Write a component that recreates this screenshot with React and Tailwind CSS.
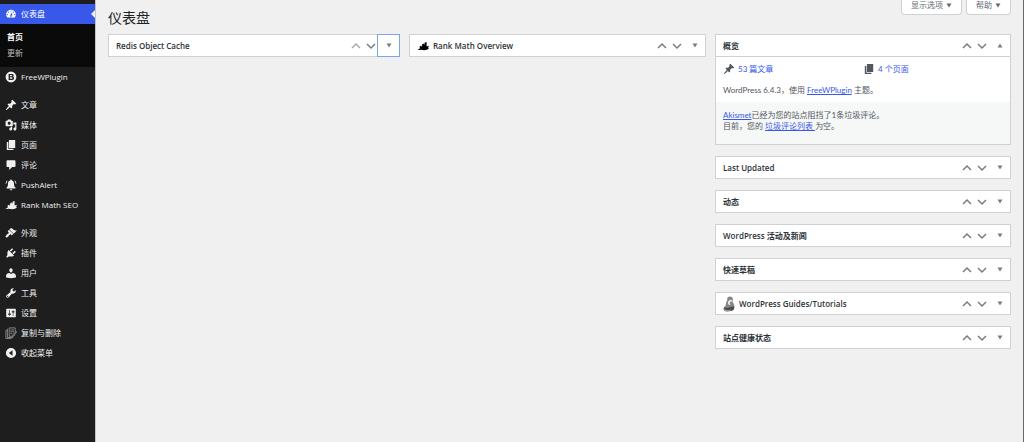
import { useState } from "react";

const icons = {
  dashboard:
    "M3.76 16h12.48c1.1-1.37 1.76-3.11 1.76-5 0-4.42-3.58-8-8-8s-8 3.58-8 8c0 1.89.66 3.63 1.76 5zM10 4c.55 0 1 .45 1 1s-.45 1-1 1-1-.45-1-1 .45-1 1-1zM6 6c.55 0 1 .45 1 1s-.45 1-1 1-1-.45-1-1 .45-1 1-1zm8 0c.55 0 1 .45 1 1s-.45 1-1 1-1-.45-1-1 .45-1 1-1zm-5.37 5.55L12 7v6c0 1.1-.9 2-2 2s-2-.9-2-2c0-.57.24-1.08.63-1.45zM4 10c.55 0 1 .45 1 1s-.45 1-1 1-1-.45-1-1 .45-1 1-1zm12 0c.55 0 1 .45 1 1s-.45 1-1 1-1-.45-1-1 .45-1 1-1zm-5 3c0-.55-.45-1-1-1s-1 .45-1 1 .45 1 1 1 1-.45 1-1z",
  plugin:
    "M10 1a9 9 0 1 0 0 18 9 9 0 0 0 0-18zM6 5h5.500c2 0 3 1 3 2.500 0 1-.4 1.700-1.200 2.100 1.200.4 1.900 1.300 1.900 2.600 0 1.900-1.400 2.800-3.400 2.800H6zm2.200 1.800v2h2.800c1.500 0 1.500-2 0-2zm0 3.700v2.600h3c2 0 2-2.600 0-2.600z",
  post: "M10.44 3.02l1.82-1.82 6.36 6.35-1.83 1.82c-1.05-.68-2.48-.57-3.41.36l-.75.75c-.92.93-1.04 2.35-.35 3.41l-1.83 1.82-2.41-2.41-2.8 2.79c-.42.42-3.38 2.71-3.8 2.29s1.86-3.39 2.28-3.81l2.79-2.79L4.1 9.36l1.83-1.82c1.05.69 2.48.57 3.4-.36l.75-.75c.93-.92 1.05-2.35.36-3.41z",
  media:
    "M13 11V4c0-.55-.45-1-1-1h-1.67L9 1H5L3.67 3H2c-.55 0-1 .45-1 1v7c0 .55.45 1 1 1h10c.55 0 1-.45 1-1zM7 4.500c1.380 0 2.500 1.120 2.500 2.500S8.380 9.500 7 9.500 4.500 8.380 4.500 7 5.620 4.500 7 4.500zM14 6h5v10.500c0 1.380-1.120 2.500-2.500 2.500S14 17.880 14 16.500s1.120-2.500 2.500-2.500c.17 0 .34.02.5.05V9h-3V6zm-4 8.050V13h2v3.500c0 1.380-1.120 2.500-2.500 2.500S7 17.880 7 16.500 8.120 14 9.500 14c.17 0 .34.02.5.05z",
  page: "M6.500 15V1.500H17V15H6.500zm-1 1.200H14v2.300H3V5h2.500v11.200z",
  comment:
    "M4.500 2h11c1.100 0 2 .9 2 2v7.500c0 1.100-.9 2-2 2H12l-5 5v-5H4.500c-1.100 0-2-.9-2-2V4c0-1.100.9-2 2-2z",
  bell: "M10 1c.9 0 1.500.6 1.500 1.400C14 3 15 5 15 7.500c0 4 .8 5.500 2.500 7V16h-15v-1.500C4.200 13 5 11.500 5 7.500 5 5 6 3 8.500 2.400 8.500 1.600 9.100 1 10 1zM7.800 17h4.400c-.2 1.300-1 2-2.200 2s-2-.7-2.200-2zM3.200 2.500l1 1C3 4.800 2.500 6.300 2.400 8H1c.1-2.200.8-4 2.200-5.500zm13.600 0C18.200 4 18.900 5.800 19 8h-1.400c-.1-1.700-.6-3.200-1.800-4.500z",
  rank: "M0 16c2-.2 3.300-.8 4.500-2V10.500l3-1v2l1-1V7l3-1v2.500l1-1.300V4.500l3.500-1v7.300l4-1.300-1.500 4 1.500.5-2.500 2c-3.500 1.300-8 1-11.500.3-2 .6-4 .6-6-.3z",
  appearance:
    "M14.48 11.06L7.41 3.99l1.5-1.5c.5-.56 2.3-.47 3.51.32 1.21.8 1.43 1.28 2.91 2.1 1.18.64 2.45 1.26 4.45.85zm-.71.71L6.7 4.7 4.93 6.47c-.39.39-.39 1.02 0 1.41l1.06 1.06c.39.39.39 1.03 0 1.42-.6.6-1.43 1.11-2.21 1.69-.35.26-.7.53-1.01.84C1.43 14.23.4 16.08 1.4 17.07c.99 1 2.84-.03 4.18-1.36.31-.31.58-.66.85-1.02.57-.78 1.08-1.61 1.69-2.21.39-.39 1.02-.39 1.41 0l1.06 1.06c.39.39 1.02.39 1.41 0z",
  plug: "M13.11 4.36L9.87 7.6 8 5.73l3.24-3.24c.35-.34 1.05-.2 1.56.32.52.51.66 1.21.31 1.55zm-8 1.77l.91-1.12 9.01 9.01-1.19.84c-.71.71-2.63 1.16-3.82 1.16H6.14L4.9 17.26c-.59.59-1.54.59-2.12 0-.59-.58-.59-1.53 0-2.12l1.24-1.24v-3.88c0-1.13.4-3.19 1.09-3.89zm7.26 3.97l3.24-3.24c.34-.35 1.04-.21 1.55.31.52.51.66 1.21.31 1.55l-3.24 3.25z",
  users:
    "M10 9.25c-2.27 0-2.73-3.44-2.73-3.44C7 4.02 7.82 2 9.97 2c2.16 0 2.98 2.02 2.71 3.81 0 0-.41 3.44-2.68 3.44zM7.230 10L10 11.820 12.720 10c2.790 0 5.520 2.330 5.520 4.530v2.990s-4.150 1.130-8.240 1.130c-4.150 0-8.240-1.130-8.240-1.130v-2.990c0-2.250 2.440-4.530 5.470-4.530z",
  tools:
    "M16.68 9.77c-1.34 1.34-3.3 1.67-4.95.99l-5.41 6.52c-.99.99-2.59.99-3.58 0s-.99-2.59 0-3.57l6.52-5.42c-.68-1.65-.35-3.61.99-4.95 1.28-1.28 3.12-1.62 4.72-1.06l-2.89 2.89 2.82 2.82 2.86-2.87c.53 1.58.18 3.39-1.08 4.65zM3.81 16.21c.4.39 1.04.39 1.43 0 .4-.4.4-1.04 0-1.43-.39-.4-1.03-.4-1.43 0-.39.39-.39 1.03 0 1.43z",
  settings:
    "M18 16V4c0-.55-.45-1-1-1H3c-.55 0-1 .45-1 1v12c0 .55.45 1 1 1h14c.55 0 1-.45 1-1zM8 11h1c.55 0 1 .45 1 1s-.45 1-1 1H8v1.500c0 .28-.22.5-.5.5s-.5-.22-.5-.5V13H6c-.55 0-1-.45-1-1s.45-1 1-1h1V5.500c0-.28.22-.5.5-.5s.5.22.5.5V11zm5-2h-1c-.55 0-1-.45-1-1s.45-1 1-1h1V5.500c0-.28.22-.5.5-.5s.5.22.5.5V7h1c.55 0 1 .45 1 1s-.45 1-1 1h-1v5.500c0 .28-.22.5-.5.5s-.5-.22-.5-.5V9z",
  collapse:
    "M10 1.500a8.500 8.500 0 1 0 0 17 8.500 8.500 0 0 0 0-17zM12.500 5.500v9L6.500 10z",
};

const menu = [
  [
    { icon: "post", label: "文章" },
    { icon: "media", label: "媒体" },
    { icon: "page", label: "页面" },
    { icon: "comment", label: "评论" },
    { icon: "bell", label: "PushAlert" },
    { icon: "rank", label: "Rank Math SEO" },
  ],
  [
    { icon: "appearance", label: "外观" },
    { icon: "plug", label: "插件" },
    { icon: "users", label: "用户" },
    { icon: "tools", label: "工具" },
    { icon: "settings", label: "设置" },
    { icon: "copy", label: "复制与删除" },
  ],
];

const Icon = ({ name, className = "size-3" }) => (
  <svg
    viewBox="0 0 20 20"
    fill="currentColor"
    fillRule="evenodd"
    className={`shrink-0 ${className}`}
  >
    <path d={icons[name]} />
  </svg>
);

const CopyIcon = () => (
  <svg
    viewBox="0 0 20 20"
    fill="none"
    stroke="currentColor"
    strokeWidth="1.3"
    className="size-3 shrink-0 text-[#a0a0a0]"
  >
    <path d="M7 1.500h10v8M17 13l-3 2.500H7v-14M5 3.500H4v14h9v-1M3 5.500H1.500v13.800H11M9 5h6M9 8h6M9 11h3M12.500 13.500l6-6 1 1-6 6z" />
  </svg>
);

const GuideIcon = () => (
  <svg viewBox="0 0 24 32" className="h-4 w-3 shrink-0">
    <path
      d="M10 2c5-3 10 0 10 5l-1 5c4 4 5 11 3 15-3 4-16 5-20 2-3-4 1-7 3-9 1-5 1-9 4-12-1-2-1-4 1-6z"
      fill="#858585"
    />
    <path d="M12 9c3-3 7-1 7 1l-3 1c-3 1-3 4-1 7-5 1-7-5-3-9z" fill="#ececec" />
    <path d="M2 22c5 3 9 2 12 0l8-1c0 3 0 5-2 7-5 3-14 3-17 1z" fill="#4a4a4a" />
    <path d="M3 26c4 3 9 3 13 1l-2 3c-4 1-9 1-12-1z" fill="#a5a5a5" />
  </svg>
);

const Triangle = ({ up }) => (
  <svg viewBox="0 0 6 5" fill="currentColor" className="h-[5px] w-1.5 shrink-0">
    <path d={up ? "M3 0.500L5.500 4.500H0.500z" : "M0.500 0.500H5.500L3 4.500z"} />
  </svg>
);

const Chevron = ({ up }) => (
  <svg
    viewBox="0 0 10 10"
    fill="none"
    stroke="currentColor"
    strokeWidth="1.500"
    className="size-2.5"
  >
    <path d={up ? "M1 7l4-4 4 4" : "M1 3l4 4 4-4"} />
  </svg>
);

const MenuItem = ({ icon, label }) => (
  <li>
    <a
      href="#"
      className="flex h-5 items-center gap-1 pl-[5px] text-[#f0f0f1] hover:text-[#7b90ff]"
    >
      {icon === "copy" ? <CopyIcon /> : <Icon name={icon} />}
      {label}
    </a>
  </li>
);

const Sidebar = () => (
  <nav className="w-24 shrink-0 border-r border-[#c4c4c4] bg-[#1e1e1e] pt-1">
    <a
      href="#"
      className="flex h-5 items-center gap-1 bg-[#3858e9] pl-[5px] text-white"
    >
      <Icon name="dashboard" />
      仪表盘
      <svg viewBox="0 0 4 8" className="ml-auto h-2 w-1" fill="#f0f0f0">
        <path d="M4 0v8L0 4z" />
      </svg>
    </a>
    <ul className="bg-[#0a0a0a] pt-[5px] pb-1.5 pl-[7px] leading-4">
      <li>
        <a href="#" className="font-semibold text-white">
          首页
        </a>
      </li>
      <li>
        <a href="#" className="text-[#bcbcbc]">
          更新
        </a>
      </li>
    </ul>
    <ul>
      <MenuItem icon="plugin" label="FreeWPlugin" />
    </ul>
    {menu.map((group, i) => (
      <ul key={i} className="mt-2">
        {group.map((m) => (
          <MenuItem key={m.label} icon={m.icon} label={m.label} />
        ))}
      </ul>
    ))}
    <button className="flex h-5 w-full cursor-pointer items-center gap-1 pl-[5px] text-[#f0f0f1]">
      <Icon name="collapse" />
      收起菜单
    </button>
  </nav>
);

const Widget = ({ title, icon, first, focused, defaultOpen, children }) => {
  const [open, setOpen] = useState(!!defaultOpen);

  return (
    <section className="border border-[#d0d1d3] bg-white">
      <div className="flex items-stretch text-[#787c82]">
        <h2 className="flex min-h-[21px] grow items-center gap-1 pl-[7px] font-semibold text-[#2c3338]">
          {icon}
          {title}
        </h2>
        <button
          aria-label="上移"
          className={`flex w-[15px] items-center justify-center ${
            first ? "text-[#a7aaad]" : ""
          }`}
        >
          <Chevron up />
        </button>
        <button
          aria-label="下移"
          className="flex w-[15px] items-center justify-center"
        >
          <Chevron />
        </button>
        <button
          aria-label="切换面板"
          onClick={() => setOpen(!open)}
          className={`flex items-center justify-center ${
            focused ? "-m-px w-[23px] border border-[#7ba7e6]" : "w-[21px]"
          }`}
        >
          <Triangle up={open && children} />
        </button>
      </div>
      {open && children}
    </section>
  );
};

const Overview = () => (
  <div className="border-t border-[#d0d1d3] font-['Lato','Noto_Sans_CJK_SC',sans-serif] text-[#50575e]">
    <div className="flex flex-col gap-[9px] px-[7px] py-1.5 leading-3">
      <ul className="grid grid-cols-2">
        <li className="flex items-center gap-[3px]">
          <Icon name="post" />
          <a href="#" className="text-[#3858e9]">
            53 篇文章
          </a>
        </li>
        <li className="flex items-center gap-[3px]">
          <Icon name="page" />
          <a href="#" className="text-[#3858e9]">
            4 个页面
          </a>
        </li>
      </ul>
      <p>
        WordPress 6.4.3，使用{" "}
        <a href="#" className="text-[#3858e9] underline">
          FreeWPlugin
        </a>{" "}
        主题。
      </p>
    </div>
    <div className="bg-[#f6f7f7] px-[7px] pt-2 pb-3 leading-[11px]">
      <p>
        <a href="#" className="text-[#3858e9] underline">
          Akismet
        </a>
        已经为您的站点阻挡了1条垃圾评论。
      </p>
      <p>
        目前，您的{" "}
        <a href="#" className="text-[#3858e9] underline">
          垃圾评论列表{" "}
        </a>
        为空。
      </p>
    </div>
  </div>
);

const ScreenTab = ({ label }) => (
  <button className="flex h-[15px] items-center gap-[3px] rounded-b-sm border border-t-0 border-[#d0d1d3] bg-white px-[9px] pb-1 text-[#646970]">
    {label}
    <Triangle />
  </button>
);

const App = () => {
  return (
    <div className="flex min-h-screen border-r border-[#6b6b6b] bg-[#f0f0f0] font-['Open_Sans','Noto_Sans_CJK_SC',sans-serif] text-[8px]">
      <Sidebar />
      <main className="grow px-3">
        <header className="flex h-[34px] items-start justify-between">
          <h1 className="pt-2 text-[14px] leading-5 text-[#1d2327]">仪表盘</h1>
          <div className="flex gap-1">
            <ScreenTab label="显示选项" />
            <ScreenTab label="帮助" />
          </div>
        </header>
        <div className="grid grid-cols-[292fr_297fr_296fr] items-start gap-[9px]">
          <Widget title="Redis Object Cache" first focused />
          <Widget
            title="Rank Math Overview"
            icon={<Icon name="rank" className="size-3 text-black" />}
          />
          <div className="flex flex-col gap-[11px]">
            <Widget title="概览" defaultOpen>
              <Overview />
            </Widget>
            <Widget title="Last Updated" />
            <Widget title="动态" />
            <Widget title="WordPress 活动及新闻" />
            <Widget title="快速草稿" />
            <Widget title="WordPress Guides/Tutorials" icon={<GuideIcon />} />
            <Widget title="站点健康状态" />
          </div>
        </div>
      </main>
    </div>
  );
};

export default App;
